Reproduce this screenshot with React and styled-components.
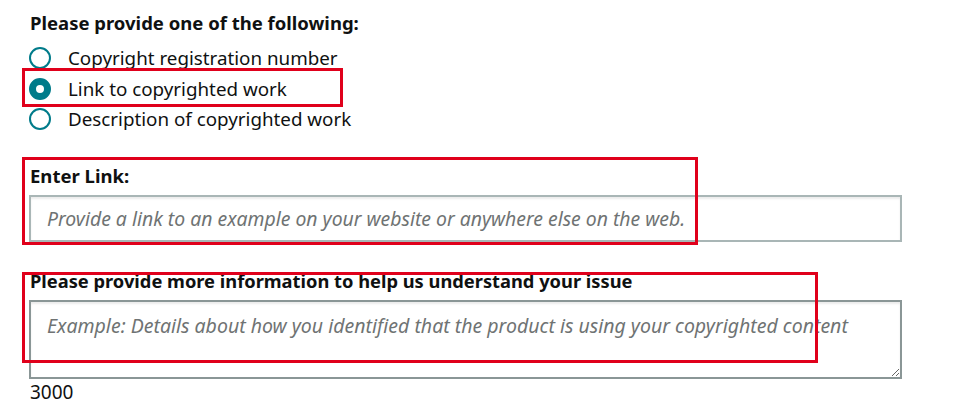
import React, { useState } from "react";
import styled, { createGlobalStyle } from "styled-components";

const Global = createGlobalStyle`
  html, body { margin: 0; padding: 0; background: #fff; }
  body { font-family: "Noto Sans", "Open Sans", Arial, sans-serif; color: #0f1111; }
  * { box-sizing: border-box; }
`;

const Page = styled.div`
  position: relative;
  width: 959px;
  height: 407px;
  overflow: hidden;
  padding: 12px 0 0 29px;
`;

const Heading = styled.div`
  font-size: 18.5px;
  font-weight: 700;
  line-height: 22px;
  padding-left: 1px;
  color: #0f1111;
`;

const RadioList = styled.div`
  display: flex;
  flex-direction: column;
  margin-top: 9px;
`;

const RadioRow = styled.label`
  display: flex;
  align-items: center;
  height: 30.5px;
  gap: 17px;
  font-size: 18.8px;
  color: #0f1111;
  cursor: pointer;
`;

const RadioDot = styled.span`
  width: 22px;
  height: 22px;
  border-radius: 50%;
  flex: none;
  border: ${(p) => (p.$checked ? "7px solid #007b8a" : "2px solid #007b8a")};
  background: #fff;
`;

const Field = styled.div`
  display: flex;
  flex-direction: column;
  width: 873px;
  margin-top: ${(p) => p.$top}px;
`;

const FieldLabel = styled.div`
  font-size: ${(p) => p.$size}px;
  font-weight: 700;
  line-height: 22px;
  padding-left: 1px;
  margin-bottom: 8px;
  color: #0f1111;
  white-space: nowrap;
`;

const TextInput = styled.input`
  width: 100%;
  height: 47px;
  border: 2px solid #a9b6b6;
  border-radius: 0;
  box-shadow: inset 0 2px 2px rgba(0,0,0,0.08);
  padding: 0 16px;
  font-family: inherit;
  font-size: 19.4px;
  color: #0f1111;
  outline: none;
  &::placeholder { color: #6f7373; font-style: italic; }
`;

const TextArea = styled.textarea`
  width: 100%;
  height: 79px;
  border: 2px solid #8a9696;
  border-radius: 0;
  box-shadow: inset 0 2px 2px rgba(0,0,0,0.08);
  padding: 12px 16px;
  font-family: inherit;
  font-size: 19.5px;
  line-height: 24px;
  color: #0f1111;
  outline: none;
  resize: both;
  display: block;
  &::placeholder { color: #6f7373; font-style: italic; }
`;

const Counter = styled.div`
  font-size: 19px;
  line-height: 24px;
  margin-top: 1px;
  padding-left: 1px;
  color: #0f1111;
`;

const Highlight = styled.div`
  position: absolute;
  border: 3px solid #e0001b;
  pointer-events: none;
`;

const options = [
  "Copyright registration number",
  "Link to copyrighted work",
  "Description of copyrighted work",
];

export default function App() {
  const [sel, setSel] = useState(1);
  return (
    <Page>
      <Global />
      <Heading>Please provide one of the following:</Heading>
      <RadioList>
        {options.map((o, i) => (
          <RadioRow key={o} onClick={() => setSel(i)}>
            <RadioDot $checked={sel === i} />
            {o}
          </RadioRow>
        ))}
      </RadioList>
      <Field $top={30.5}>
        <FieldLabel $size={18.5}>Enter Link:</FieldLabel>
        <TextInput placeholder="Provide a link to an example on your website or anywhere else on the web." />
      </Field>
      <Field $top={28}>
        <FieldLabel $size={18.3}>Please provide more information to help us understand your issue</FieldLabel>
        <TextArea placeholder="Example: Details about how you identified that the product is using your copyrighted content" />
        <Counter>3000</Counter>
      </Field>
      <Highlight style={{ left: 22, top: 68, width: 321, height: 39 }} />
      <Highlight style={{ left: 22, top: 157, width: 676, height: 88 }} />
      <Highlight style={{ left: 22, top: 272, width: 796, height: 91 }} />
    </Page>
  );
}
